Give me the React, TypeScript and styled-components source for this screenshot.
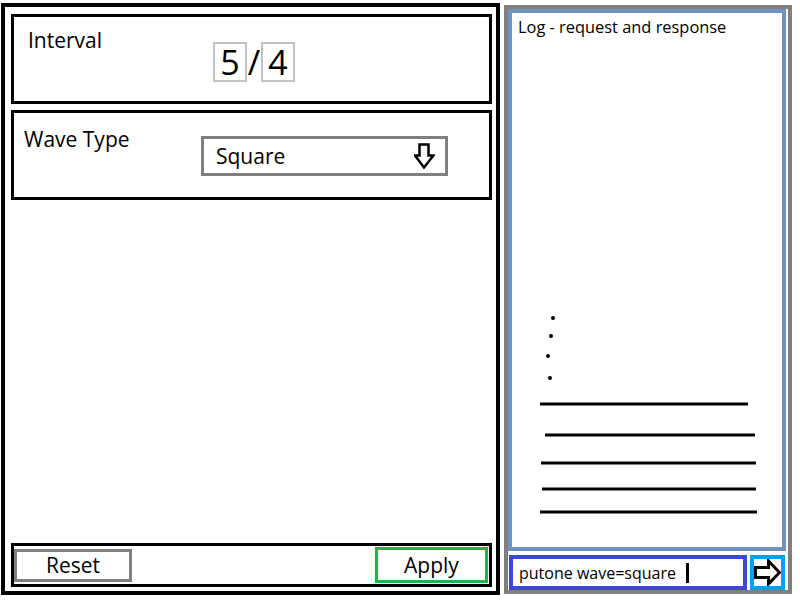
import React from "react";
import styled, { createGlobalStyle } from "styled-components";

const GlobalStyle = createGlobalStyle`
    html, body {
        margin: 0;
        padding: 0;
        background: #ffffff;
    }
    body {
        font-family: "Open Sans", "Noto Sans", sans-serif;
        color: #000000;
    }
`

const Page = styled.div`
    width: 800px;
    height: 600px;
    box-sizing: border-box;
    padding: 3px 0 0 1px;
    display: flex;
    flex-direction: row;
    align-items: flex-start;
    gap: 4px;
`

const ControlPanel = styled.div`
    width: 499px;
    height: 592px;
    box-sizing: border-box;
    border: 4px solid #000000;
    padding: 7px 4px 4px 6px;
    display: flex;
    flex-direction: column;
`

const Section = styled.div<{ $gap?: number }>`
    height: 90px;
    box-sizing: border-box;
    border: 3px solid #000000;
    margin-bottom: ${(p) => p.$gap ?? 0}px;
`

const FieldRow = styled.div<{ $top: number; $left: number; $labelWidth: number }>`
    display: grid;
    grid-template-columns: ${(p) => p.$labelWidth}px auto;
    align-items: start;
    padding: ${(p) => p.$top}px 0 0 ${(p) => p.$left}px;
`

const Label = styled.div`
    font-size: 21px;
    line-height: 28px;
`

const Fraction = styled.div`
    display: flex;
    flex-direction: row;
    align-items: center;
    margin-top: 16px;
`

const DigitBox = styled.div`
    width: 34px;
    height: 40px;
    box-sizing: border-box;
    border: 2px solid #c3c3c3;
    display: flex;
    align-items: center;
    justify-content: center;
    font-size: 34px;
    line-height: 36px;
`

const Slash = styled.span`
    width: 14px;
    text-align: center;
    font-size: 34px;
    line-height: 36px;
`

const Select = styled.div`
    width: 247px;
    height: 40px;
    margin-top: 11px;
    box-sizing: border-box;
    border: 3px solid #7f7f7f;
    padding: 0 10px 0 12px;
    display: flex;
    align-items: center;
    justify-content: space-between;
    font-size: 21px;
`

const Filler = styled.div`
    flex: 1;
`

const ButtonBar = styled.div`
    height: 44px;
    box-sizing: border-box;
    border: 3px solid #000000;
    padding: 0 1px 0 0;
    display: flex;
    align-items: center;
    justify-content: space-between;
`

const BarButton = styled.button<{ $color: string; $w: number; $h: number }>`
    width: ${(p) => p.$w}px;
    height: ${(p) => p.$h}px;
    box-sizing: border-box;
    border: 3px solid ${(p) => p.$color};
    background: #ffffff;
    padding: 0;
    font-family: "Open Sans", "Noto Sans", sans-serif;
    font-size: 21px;
    line-height: 1;
    color: #000000;
`

const LogPanel = styled.div`
    width: 288px;
    height: 589px;
    margin-top: 2px;
    box-sizing: border-box;
    border: 4px solid #7f7f7f;
    padding: 0 2px 0 0;
    display: flex;
    flex-direction: column;
    gap: 4px;
`

const LogBox = styled.div`
    flex: 1;
    box-sizing: border-box;
    border: 4px solid #7092be;
    padding: 3px 0 0 6px;
    display: flex;
    flex-direction: column;
`

const LogTitle = styled.div`
    font-size: 16.4px;
    line-height: 22px;
`

const Sketch = styled.svg`
    margin-top: auto;
    margin-bottom: 30px;
    margin-left: -6px;
    display: block;
`

const CommandRow = styled.div`
    height: 35px;
    display: flex;
    flex-direction: row;
    gap: 3px;
    padding-left: 1px;
`

const CommandInput = styled.div`
    width: 238px;
    box-sizing: border-box;
    border: 4px solid #3f48cc;
    padding: 0 0 0 6px;
    display: flex;
    align-items: center;
    font-size: 16px;
`

const Caret = styled.span`
    width: 3px;
    height: 20px;
    background: #000000;
    margin-left: 10px;
`

const SendButton = styled.button`
    width: 35px;
    box-sizing: border-box;
    border: 4px solid #00a2e8;
    background: #ffffff;
    padding: 0;
    display: flex;
    align-items: center;
    justify-content: center;
`

const DownArrow = () => (
    <svg width="21" height="27" viewBox="0 0 21 27">
        <path d="M5.5 1.5 H14.5 V12.5 H19.5 L10 24.5 L1 12.5 H5.5 Z" fill="none" stroke="#000" strokeWidth="2.5" strokeLinejoin="miter" />
    </svg>
)

const RightArrow = () => (
    <svg width="27" height="27" viewBox="0 0 27 27">
        <path d="M1.5 8.5 H14.5 V2 L25.5 13.5 L14.5 25 V18.5 H1.5 Z" fill="none" stroke="#000" strokeWidth="3" strokeLinejoin="miter" />
    </svg>
)

// log entries, sketched: origin is the log box's inner left edge
const dots = [
    [41, 17], [39, 35], [36, 55], [38, 77],
]
const lines = [
    [28, 236, 103], [33, 243, 134], [29, 244, 162], [30, 244, 188], [28, 245, 211],
]

const LogSketch = () => (
    <Sketch width="274" height="216" viewBox="0 0 274 216">
        {dots.map(([x, y], i) => (
            <circle key={i} cx={x} cy={y} r="2" fill="#000" />
        ))}
        {lines.map(([x1, x2, y], i) => (
            <rect key={i} x={x1} y={y - 1.5} width={x2 - x1} height="3" fill="#000" />
        ))}
    </Sketch>
)

export default function App() {
    return (
        <>
            <GlobalStyle />
            <Page>
                <ControlPanel>
                    <Section $gap={6}>
                        <FieldRow $top={9} $left={14} $labelWidth={185}>
                            <Label>Interval</Label>
                            <Fraction>
                                <DigitBox>5</DigitBox>
                                <Slash>/</Slash>
                                <DigitBox>4</DigitBox>
                            </Fraction>
                        </FieldRow>
                    </Section>
                    <Section>
                        <FieldRow $top={12} $left={10} $labelWidth={177}>
                            <Label>Wave Type</Label>
                            <Select>
                                <span>Square</span>
                                <DownArrow />
                            </Select>
                        </FieldRow>
                    </Section>
                    <Filler />
                    <ButtonBar>
                        <BarButton $color="#7f7f7f" $w={118} $h={33}>Reset</BarButton>
                        <BarButton $color="#22b14c" $w={113} $h={36}>Apply</BarButton>
                    </ButtonBar>
                </ControlPanel>
                <LogPanel>
                    <LogBox>
                        <LogTitle>Log - request and response</LogTitle>
                        <LogSketch />
                    </LogBox>
                    <CommandRow>
                        <CommandInput>
                            <span>putone wave=square</span>
                            <Caret />
                        </CommandInput>
                        <SendButton>
                            <RightArrow />
                        </SendButton>
                    </CommandRow>
                </LogPanel>
            </Page>
        </>
    )
}
